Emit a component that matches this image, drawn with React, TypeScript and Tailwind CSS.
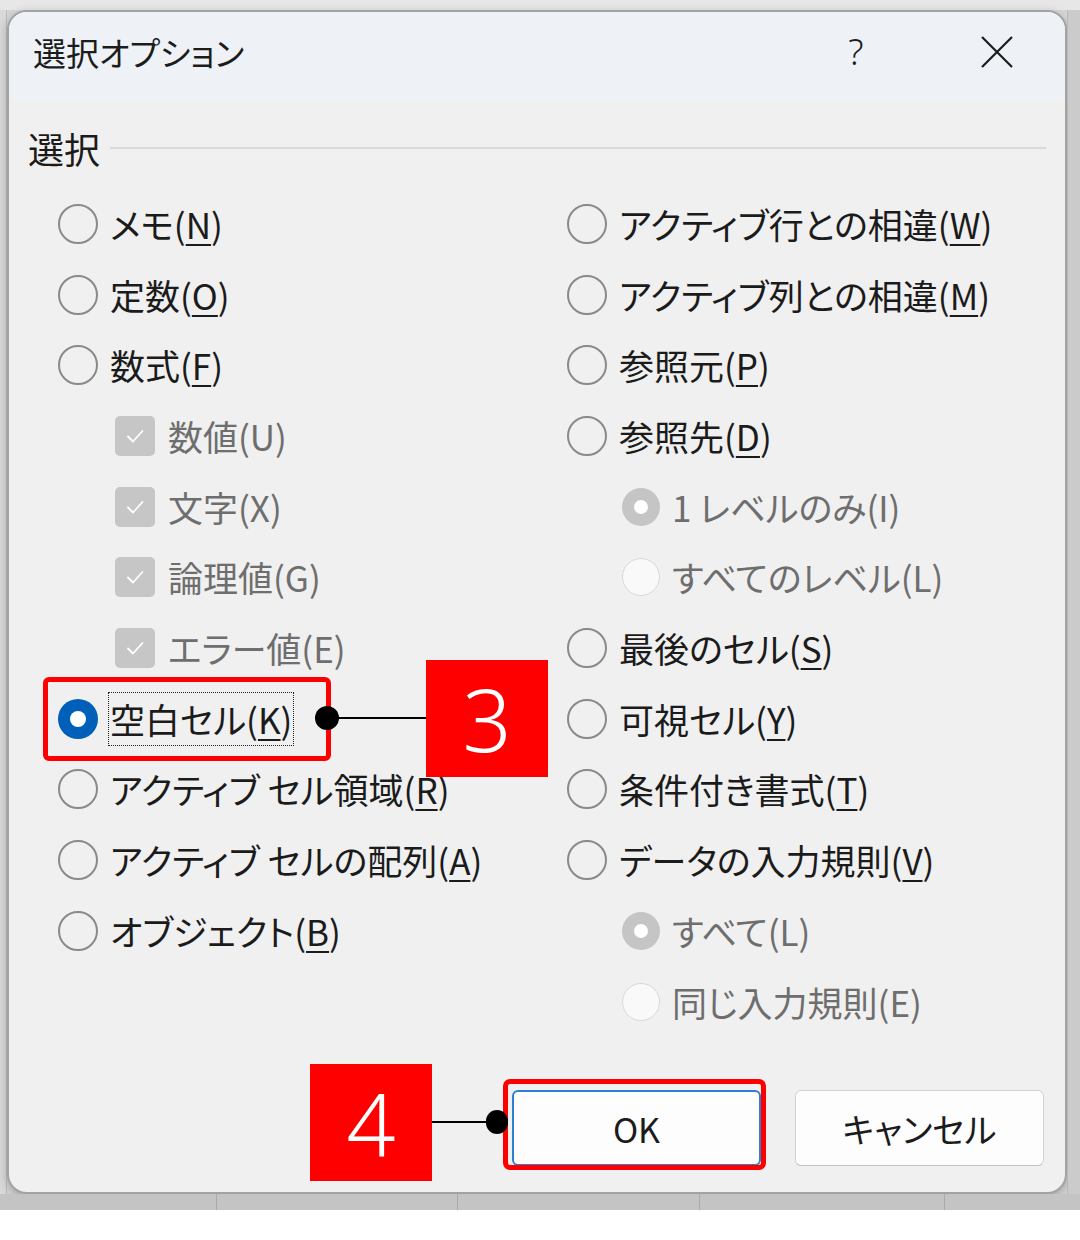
import React from 'react';

type Opt = {
  t: string;
  k: string;
  type: 'radio' | 'check' | 'subOn' | 'subOff';
  on?: boolean;
  focus?: boolean;
};

const leftOpts: Opt[] = [
  { t: 'メモ', k: 'N', type: 'radio' },
  { t: '定数', k: 'O', type: 'radio' },
  { t: '数式', k: 'F', type: 'radio' },
  { t: '数値', k: 'U', type: 'check' },
  { t: '文字', k: 'X', type: 'check' },
  { t: '論理値', k: 'G', type: 'check' },
  { t: 'エラー値', k: 'E', type: 'check' },
  { t: '空白セル', k: 'K', type: 'radio', on: true, focus: true },
  { t: 'アクティブ セル領域', k: 'R', type: 'radio' },
  { t: 'アクティブ セルの配列', k: 'A', type: 'radio' },
  { t: 'オブジェクト', k: 'B', type: 'radio' },
];

const rightOpts: Opt[] = [
  { t: 'アクティブ行との相違', k: 'W', type: 'radio' },
  { t: 'アクティブ列との相違', k: 'M', type: 'radio' },
  { t: '参照元', k: 'P', type: 'radio' },
  { t: '参照先', k: 'D', type: 'radio' },
  { t: '1 レベルのみ', k: 'I', type: 'subOn' },
  { t: 'すべてのレベル', k: 'L', type: 'subOff' },
  { t: '最後のセル', k: 'S', type: 'radio' },
  { t: '可視セル', k: 'Y', type: 'radio' },
  { t: '条件付き書式', k: 'T', type: 'radio' },
  { t: 'データの入力規則', k: 'V', type: 'radio' },
  { t: 'すべて', k: 'L', type: 'subOn' },
  { t: '同じ入力規則', k: 'E', type: 'subOff' },
];

const Mark = ({ o }: { o: Opt }) => {
  if (o.type === 'check') {
    return (
      <div className="ml-[57px] w-[40px] h-[40px] rounded-[5px] bg-[#c6c6c6] flex items-center justify-center shrink-0">
        <svg width="40" height="40" viewBox="0 0 40 40">
          <polyline points="13,20.5 18,25.5 27.5,15" fill="none" stroke="#ffffff" strokeWidth="1.8" strokeLinecap="round" strokeLinejoin="round" />
        </svg>
      </div>
    );
  }
  if (o.type === 'subOn') {
    return (
      <div className="ml-[55px] w-[38px] h-[38px] rounded-full bg-[#c5c5c5] flex items-center justify-center shrink-0">
        <div className="w-[14px] h-[14px] rounded-full bg-white" />
      </div>
    );
  }
  if (o.type === 'subOff') {
    return <div className="ml-[55px] w-[38px] h-[38px] rounded-full border-[1.5px] border-[#d9d9d9] bg-[#f9f9f9] shrink-0" />;
  }
  if (o.on) {
    return (
      <div className="w-[40px] h-[40px] rounded-full bg-[#005fb8] flex items-center justify-center shrink-0">
        <div className="w-[16px] h-[16px] rounded-full bg-white" />
      </div>
    );
  }
  return <div className="w-[40px] h-[40px] rounded-full border-2 border-[#8a8a8a] shrink-0" />;
};

const Row = ({ o }: { o: Opt }) => {
  const disabled = o.type !== 'radio';
  const gap = o.type === 'check' ? 'gap-[13px]' : 'gap-[12px]';
  return (
    <div className={`h-[70.7px] flex items-center ${gap}`}>
      <Mark o={o} />
      <span
        className={`text-[35px] leading-[50px] whitespace-pre ${disabled ? 'text-[#6e6e6e]' : 'text-[#1b1b1b]'} ${
          o.focus ? 'outline-[1.5px] outline-dotted outline-[#222] outline-offset-[1px]' : ''
        }`}
      >
        {o.t}(
        {disabled ? o.k : <span className="underline decoration-[2px] underline-offset-[5px]">{o.k}</span>}
        )
      </span>
    </div>
  );
};

const Callout = ({ n, className }: { n: string; className: string }) => (
  <div className={`absolute w-[122px] h-[117px] bg-[#ff0000] flex items-center justify-center ${className}`}>
    <span className="text-white text-[86px] leading-none font-['Noto_Sans',sans-serif] font-light">{n}</span>
  </div>
);

export default function App() {
  return (
    <div className="relative w-[1080px] h-[1240px] bg-white overflow-hidden font-['Noto_Sans_CJK_JP',sans-serif] [font-feature-settings:'palt']">
      <div className="h-[1210px] flex flex-col bg-[#d6d6d6]">
        <div className="h-[10px] bg-[#e7e7e7] shrink-0" />
        <div className="flex shrink-0">
          <div className="w-[7px] bg-[#d9d9d9] border-r border-[#bdbdbd]" />
          <div className="w-[1060px] h-[1184px] rounded-[20px] border-2 border-[#a3a3a3] bg-[#f0f0f0] overflow-hidden flex flex-col shadow-[0_3px_10px_rgba(0,0,0,0.25)]">
            {/* title bar */}
            <div className="h-[88px] bg-[#eef2f7] flex items-center pb-[8px] pl-[24px] pr-[48px] shrink-0">
              <span className="text-[33px] leading-none text-[#1c1c1c]">選択オプション</span>
              <div className="ml-auto flex items-center gap-[101px]">
                <span className="w-[40px] text-center text-[36px] leading-none text-[#1c1c1c] font-['Noto_Sans',sans-serif] font-light">?</span>
                <div className="w-[40px] flex justify-center">
                  <svg width="32" height="32" viewBox="0 0 32 32">
                    <path d="M1 1 L31 31 M31 1 L1 31" stroke="#1c1c1c" strokeWidth="2.2" fill="none" />
                  </svg>
                </div>
              </div>
            </div>

            {/* group header */}
            <div className="mt-[28px] h-[40px] flex items-center px-[19px] shrink-0">
              <span className="text-[36px] leading-none text-[#1b1b1b]">選択</span>
              <div className="ml-[10px] flex-1 h-[2px] bg-[#d9d9d9]" />
            </div>

            {/* options */}
            <div className="mt-[20.65px] flex pl-[49px]">
              <div className="w-[509px] flex flex-col">
                {leftOpts.map((o, i) => (
                  <Row key={i} o={o} />
                ))}
              </div>
              <div className="flex flex-col">
                {rightOpts.map((o, i) => (
                  <Row key={i} o={o} />
                ))}
              </div>
            </div>

            {/* buttons */}
            <div className="mt-auto flex justify-end gap-[34px] pr-[21px] pb-[26px] shrink-0">
              <button className="w-[249px] h-[76px] rounded-[6px] bg-[#fdfdfd] border-2 border-[#2f80d0] text-[34px] text-[#1b1b1b] flex items-center justify-center">
                OK
              </button>
              <button className="w-[249px] h-[76px] rounded-[6px] bg-[#fdfdfd] border-[1.5px] border-[#d2d2d2] border-b-[#c2c2c2] text-[34px] text-[#1b1b1b] flex items-center justify-center">
                キャンセル
              </button>
            </div>
          </div>
          <div className="flex-1 bg-[#cbcbcb] border-l border-[#b8b8b8]" />
        </div>
        <div className="flex-1 flex bg-[#c4c4c4]">
          <div className="w-[217px] border-r border-[#a9a9a9]" />
          <div className="w-[241px] border-r border-[#a9a9a9]" />
          <div className="w-[242px] border-r border-[#a9a9a9]" />
          <div className="w-[245px] border-r border-[#a9a9a9]" />
          <div className="flex-1" />
        </div>
      </div>

      {/* annotation: step 3 */}
      <div className="absolute left-[43px] top-[677px] w-[288px] h-[84px] border-[5px] border-[#ff0000] rounded-[6px]" />
      <div className="absolute left-[327px] top-[717px] w-[100px] h-[2px] bg-black" />
      <div className="absolute left-[315px] top-[706px] w-[24px] h-[24px] rounded-full bg-black" />
      <Callout n="3" className="left-[426px] top-[660px]" />

      {/* annotation: step 4 */}
      <div className="absolute left-[503px] top-[1079px] w-[263px] h-[91px] border-[5px] border-[#ff0000] rounded-[7px]" />
      <div className="absolute left-[432px] top-[1121px] w-[65px] h-[2px] bg-black" />
      <div className="absolute left-[486px] top-[1110px] w-[22px] h-[24px] rounded-full bg-black" />
      <Callout n="4" className="left-[310px] top-[1064px]" />
    </div>
  );
}
